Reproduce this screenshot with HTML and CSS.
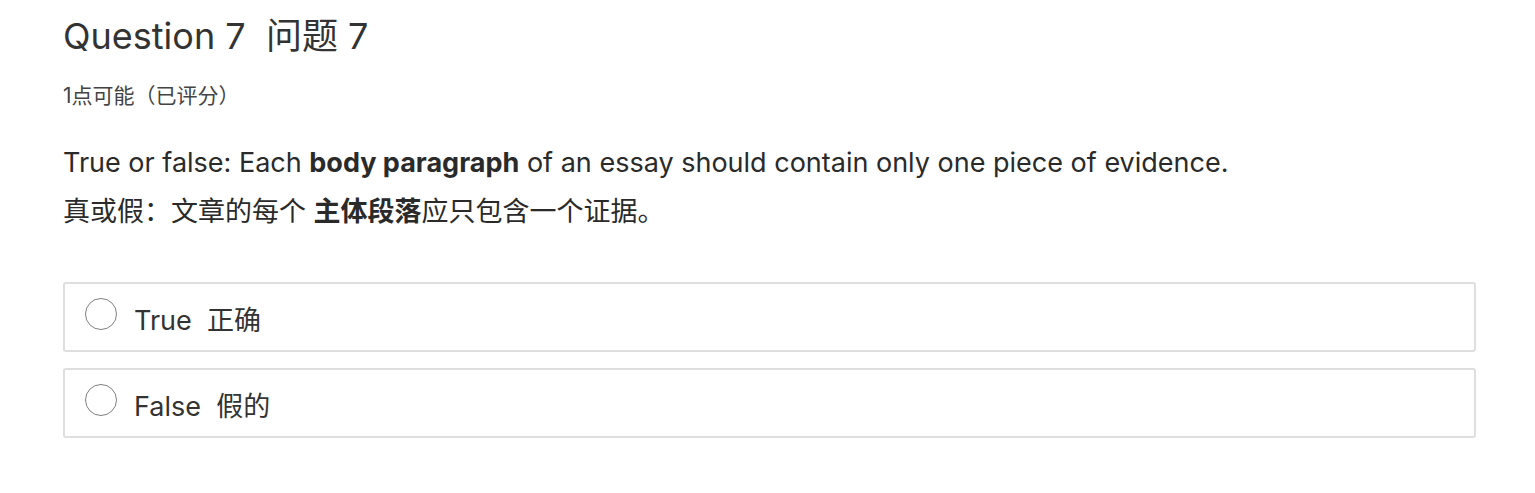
FILE: index.html
```html
<!DOCTYPE html>
<html lang="zh">
<head>
<meta charset="utf-8">
<link rel="stylesheet" href="styles.css">
</head>
<body>
<div class="quiz">
  <h2 class="title">Question 7&nbsp; 问题 7</h2>
  <div class="points">1点可能（已评分）</div>
  <div class="question">
    <p class="line">True or false: Each <strong>body paragraph</strong> of an essay should contain only one piece of evidence.</p>
    <p class="line">真或假：文章的每个 <strong>主体段落</strong>应只包含一个证据。</p>
  </div>
  <div class="answers">
    <label class="answer"><span class="radio"></span><span class="answer-text">True&nbsp; 正确</span></label>
    <label class="answer"><span class="radio"></span><span class="answer-text">False&nbsp; 假的</span></label>
  </div>
</div>
</body>
</html>
```
FILE: styles.css
```css
html, body {
  margin: 0;
  padding: 0;
  background: #ffffff;
}
body {
  font-family: Inter, "Noto Sans CJK SC", sans-serif;
  color: #2f2f2f;
}
.quiz {
  padding: 11px 59px 0 63px;
}
.title {
  margin: 0;
  font-size: 36px;
  font-weight: 400;
  line-height: 50px;
  color: #333;
}
.points {
  margin-top: 21px;
  font-size: 21px;
  line-height: 28px;
  color: #444;
}
.question {
  margin-top: 28px;
}
.line {
  margin: 0;
  font-size: 27px;
  line-height: 49px;
  color: #2a2a2a;
}
.line strong {
  font-weight: 700;
}
.answers {
  margin-top: 46px;
  display: flex;
  flex-direction: column;
  gap: 16px;
}
.answer {
  display: flex;
  align-items: center;
  gap: 17px;
  height: 66px;
  padding: 0 20px;
  border: 2px solid #dedede;
  border-radius: 3px;
}
.radio {
  width: 30px;
  height: 30px;
  border: 1.5px solid #808080;
  border-radius: 50%;
  flex: none;
  margin-top: -6px;
}
.answer-text {
  font-size: 27px;
  color: #333;
  margin-top: 2px;
}
```
